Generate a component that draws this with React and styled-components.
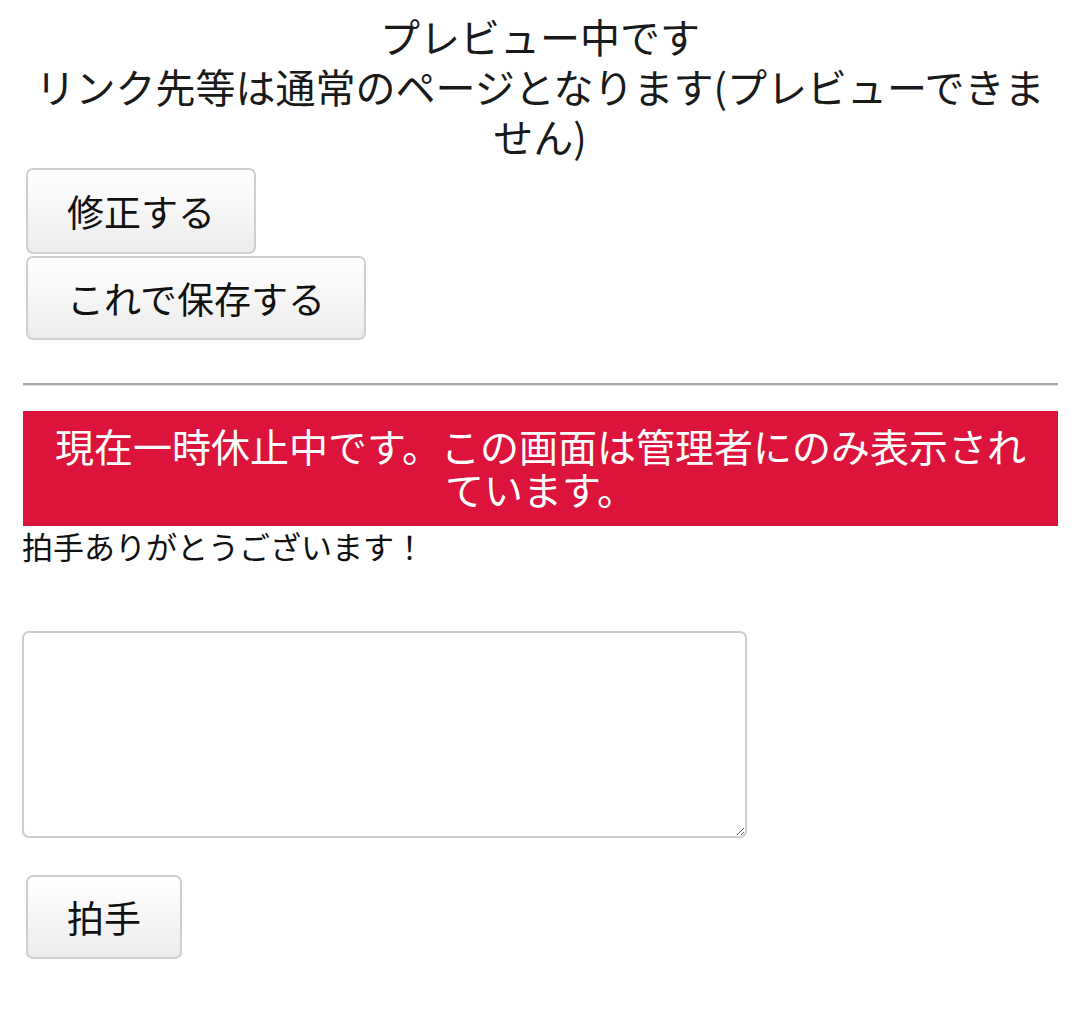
import React from "react";
import styled, { createGlobalStyle } from "styled-components";

const GlobalStyle = createGlobalStyle`
  html, body {
    margin: 0;
    padding: 0;
    background: #ffffff;
  }
  body {
    font-family: "Noto Sans CJK JP", "Noto Sans", sans-serif;
    color: #111111;
  }
`;

const Page = styled.div`
  padding: 11px 22px 40px;
`;

const PreviewNotice = styled.div`
  text-align: center;
  font-size: 40px;
  line-height: 50px;
  color: #1a1a1a;
`;

const ActionList = styled.div`
  display: flex;
  flex-direction: column;
  align-items: flex-start;
  gap: 2px;
  margin-top: 7px;
  padding-left: 4px;
`;

const PlainButton = styled.button`
  font-family: inherit;
  font-size: 37px;
  line-height: 50px;
  color: #111111;
  height: ${(p) => p.$height || 86}px;
  padding: 0 39px;
  border: 2px solid #cfcfcf;
  border-radius: 7px;
  background: linear-gradient(to bottom, #ffffff 0%, #f4f4f4 60%, #ececec 100%);
  cursor: pointer;
`;

const Divider = styled.hr`
  margin: 43px 0 0 1px;
  border: none;
  height: 2px;
  background: #a8a8a8;
  border-bottom: 1px solid #e2e2e2;
`;

const PausedBanner = styled.div`
  margin: 25px 0 0 1px;
  background: #dc143c;
  color: #ffffff;
  text-align: center;
  font-size: 39px;
  line-height: 43px;
  padding: 13px 20px 16px;
`;

const ThanksText = styled.p`
  margin: 0;
  font-size: 31px;
  line-height: 40px;
`;

const MessageBox = styled.textarea`
  display: block;
  box-sizing: border-box;
  margin-top: 65px;
  width: 725px;
  height: 207px;
  border: 2px solid #cdcdcd;
  border-radius: 7px;
  font-family: inherit;
  font-size: 30px;
  padding: 8px;
  resize: both;
`;

const ClapRow = styled.div`
  margin-top: 37px;
  padding-left: 4px;
`;

export default function App() {
  return (
    <>
      <GlobalStyle />
      <Page>
        <PreviewNotice>
          プレビュー中です
          <br />
          リンク先等は通常のページとなります(プレビューできません)
        </PreviewNotice>
        <ActionList>
          <PlainButton $height={86}>修正する</PlainButton>
          <PlainButton $height={84}>これで保存する</PlainButton>
        </ActionList>
        <Divider />
        <PausedBanner>
          現在一時休止中です。この画面は管理者にのみ表示されています。
        </PausedBanner>
        <ThanksText>拍手ありがとうございます！</ThanksText>
        <MessageBox />
        <ClapRow>
          <PlainButton $height={84}>拍手</PlainButton>
        </ClapRow>
      </Page>
    </>
  );
}
